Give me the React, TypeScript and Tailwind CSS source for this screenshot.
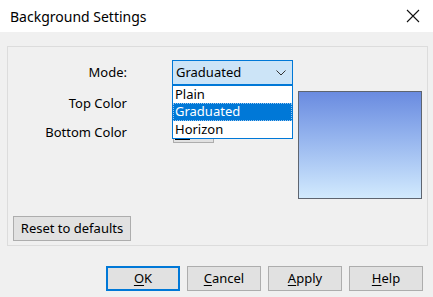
import React from "react";

const font = { fontFamily: '"Noto Sans", "Open Sans", sans-serif' };

const Btn = ({ u, rest, primary }: { u: string; rest: string; primary?: boolean }) => (
  <button
    className={
      "w-[74px] h-[25px] bg-[#e1e1e1] text-[13px] text-black leading-none flex items-center justify-center " +
      (primary ? "border-2 border-[#0078d7]" : "border border-[#adadad]")
    }
  >
    <span>
      <span className="underline underline-offset-2">{u}</span>
      {rest}
    </span>
  </button>
);

const App = () => {
  return (
    <div className="w-[433px] h-[297px] bg-[#f0f0f0] flex flex-col text-black" style={font}>
      <div className="h-[32px] bg-white flex items-center justify-between pl-[10px] pr-[13px]">
        <span className="text-[14px]">Background Settings</span>
        <svg width="14" height="14" viewBox="0 0 14 14">
          <path d="M1 1 L13 13 M13 1 L1 13" stroke="#111" strokeWidth="1.1" />
        </svg>
      </div>

      <div className="mt-[14px] ml-[7px] w-[421px] h-[200px] border border-[#dcdcdc] flex flex-col">
        <div className="flex flex-1">
          <div className="flex-1 flex flex-col text-[13px]">
            <div className="mt-[13px] flex items-center h-[25px]">
              <div className="w-[119px] text-right">Mode:</div>
              <div className="relative ml-[45px] w-[121px] h-[25px]">
                <div className="h-full bg-[#cce4f7] border border-[#0078d7] flex items-center justify-between pl-[3px] pr-[6px]">
                  <span>Graduated</span>
                  <svg width="10" height="6" viewBox="0 0 10 6">
                    <path d="M0.5 0.5 L5 5 L9.5 0.5" stroke="#333" fill="none" strokeWidth="1" />
                  </svg>
                </div>
                <div className="absolute left-0 top-full w-full bg-white border border-[#0078d7] z-10 text-[13px] leading-[17px]">
                  <div className="pl-[2px] h-[17px]">Plain</div>
                  <div className="pl-[2px] h-[18px] bg-[#0078d7] text-white outline outline-1 outline-dotted outline-[#9cc6ee] -outline-offset-1">
                    Graduated
                  </div>
                  <div className="pl-[2px] h-[17px]">Horizon</div>
                </div>
              </div>
            </div>
            <div className="mt-[8px] flex items-center h-[21px]">
              <div className="w-[119px] text-right">Top Color</div>
              <div className="ml-[46px] w-[41px] h-[21px] bg-[#e1e1e1] border border-[#adadad]" />
            </div>
            <div className="mt-[8px] flex items-center h-[21px]">
              <div className="w-[119px] text-right">Bottom Color</div>
              <div className="ml-[46px] w-[41px] h-[21px] bg-[#e1e1e1] border border-[#adadad] flex items-end pl-[1px] pb-[2px]">
                <div className="w-[15px] h-[3px] bg-black" />
              </div>
            </div>
          </div>
          <div className="pt-[44px] pr-[5px]">
            <div className="w-[124px] h-[108px] border border-[#5e6570] bg-gradient-to-b from-[#6a8be0] to-[#d2eafd]" />
          </div>
        </div>
        <div className="ml-[5px] mb-[4px]">
          <button className="w-[118px] h-[25px] bg-[#e1e1e1] border border-[#adadad] text-[13px] leading-none">
            Reset to defaults
          </button>
        </div>
      </div>

      <div className="mt-[20px] flex justify-end gap-[7px] pr-[10px]">
        <Btn u="O" rest="K" primary />
        <Btn u="C" rest="ancel" />
        <Btn u="A" rest="pply" />
        <Btn u="H" rest="elp" />
      </div>
    </div>
  );
};

export default App;
